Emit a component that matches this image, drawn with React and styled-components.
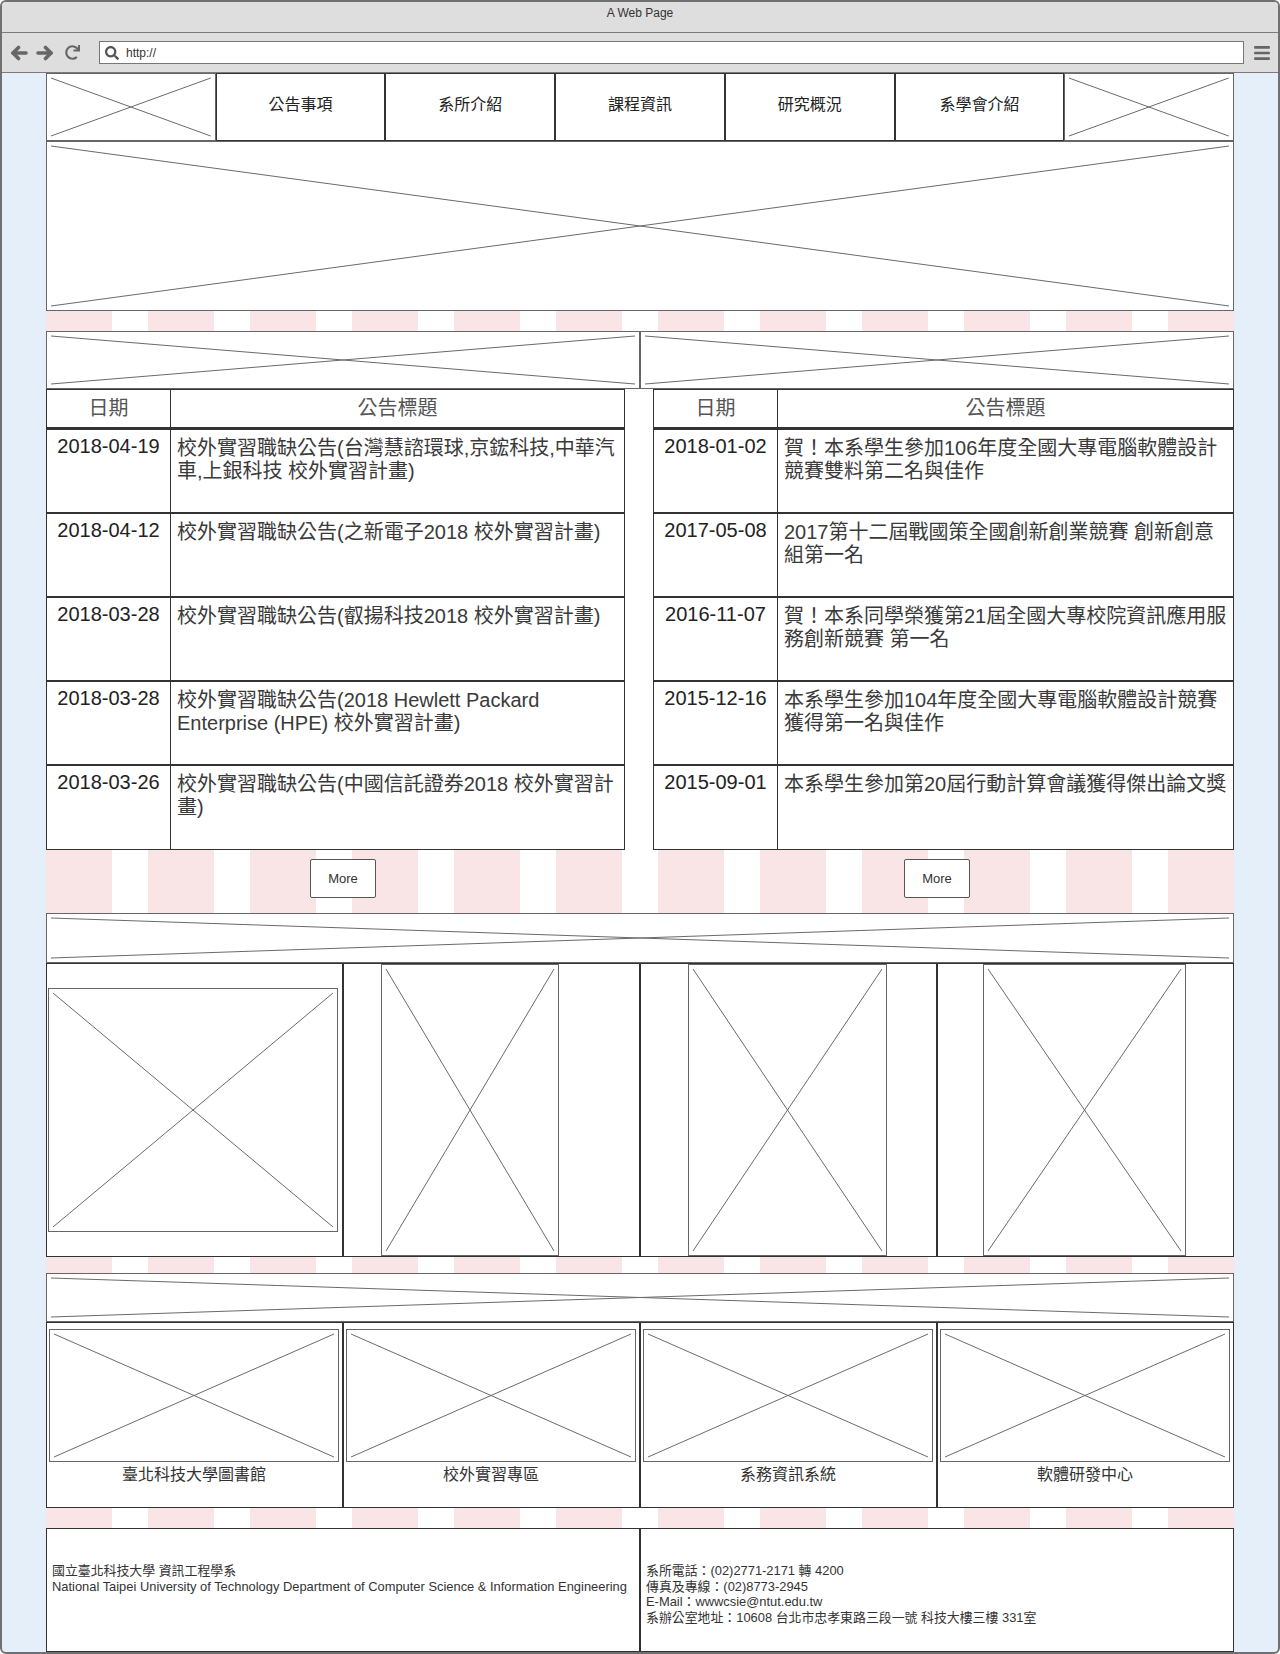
import React from 'react';
import styled, { createGlobalStyle } from 'styled-components';
import { FaRedo, FaSearch, FaBars } from 'react-icons/fa';

const SANS = `"Liberation Sans", "Noto Sans CJK TC", Arial, sans-serif`;

const GlobalStyle = createGlobalStyle`
  html, body { margin: 0; padding: 0; background: #ffffff; }
  *, *::before, *::after { box-sizing: border-box; }
`;

const Window = styled.div`
  width: 1280px;
  height: 1654px;
  border: 2px solid #707070;
  border-radius: 6px;
  overflow: hidden;
  display: flex;
  flex-direction: column;
  background: #e5effa;
  font-family: ${SANS};
`;

const TitleBar = styled.div`
  flex: none;
  height: 31px;
  background: #dedede;
  border-bottom: 1px solid #7a7a7a;
  display: flex;
  justify-content: center;
  padding-top: 3px;
  font-size: 12px;
  line-height: 16px;
  color: #333;
`;

const AddressBar = styled.div`
  flex: none;
  height: 40px;
  background: #dedede;
  border-bottom: 1px solid #7a7a7a;
  display: flex;
  align-items: center;
  padding: 0 7px 0 8px;
  color: #666;
`;

const IconSlot = styled.span`
  flex: none;
  width: ${p => p.$w}px;
  margin-right: ${p => p.$mr || 0}px;
  display: flex;
  align-items: center;
  justify-content: center;
  color: ${p => p.$color || '#666'};
`;

const UrlBox = styled.div`
  flex: 1;
  height: 23px;
  background: #fff;
  border: 1px solid #777;
  display: flex;
  align-items: center;
  padding-left: 4px;
  margin-right: 9px;
  font-size: 12px;
  color: #333;
`;

function Arrow({ dir }) {
  const flip = dir === 'right' ? 'scale(-1,1) translate(-18,0)' : undefined;
  return (
    <svg width="18" height="16" viewBox="0 0 18 16">
      <g transform={flip} fill="none" stroke="#666" strokeWidth="3.6" strokeLinecap="round" strokeLinejoin="round">
        <line x1="3" y1="8" x2="16" y2="8" />
        <polyline points="8.5,2.5 3,8 8.5,13.5" />
      </g>
    </svg>
  );
}

const Content = styled.div`
  flex: 1;
  display: flex;
  justify-content: center;
`;

const Page = styled.div`
  width: 1188px;
  display: flex;
  flex-direction: column;
  background: repeating-linear-gradient(
    to right,
    #f9e4e6 0px,
    #f9e4e6 66px,
    #ffffff 66px,
    #ffffff 102px
  );
`;

const PhBox = styled.div`
  position: relative;
  flex: none;
  background: #fff;
  border: 1px solid #666;
  width: ${p => (p.$w ? `${p.$w}px` : 'auto')};
  height: ${p => (p.$h ? `${p.$h}px` : 'auto')};
  margin-left: ${p => p.$ml || 0}px;
`;

const XSvg = styled.svg`
  position: absolute;
  top: 4px;
  left: 4px;
  width: calc(100% - 8px);
  height: calc(100% - 8px);
  overflow: visible;
`;

function Placeholder({ w, h, ml }) {
  return (
    <PhBox $w={w} $h={h} $ml={ml}>
      <XSvg>
        <line x1="0" y1="0" x2="100%" y2="100%" stroke="#6a6a6a" strokeWidth="1" />
        <line x1="100%" y1="0" x2="0" y2="100%" stroke="#6a6a6a" strokeWidth="1" />
      </XSvg>
    </PhBox>
  );
}

const NavRow = styled.div`
  display: grid;
  grid-template-columns: repeat(7, 1fr);
  grid-template-rows: 68px;
  height: 68px;
  background: #fff;
`;

const NavItem = styled.div`
  border: 1px solid #333;
  display: flex;
  align-items: center;
  justify-content: center;
  padding-bottom: 8px;
  font-size: 16px;
  color: #222;
  background: #fff;
`;

const Band = styled.div`
  flex: none;
  height: ${p => p.$h}px;
`;

const TwoCols = styled.div`
  display: grid;
  grid-template-columns: 1fr 1fr;
`;

const NewsCol = styled.div`
  display: flex;
  flex-direction: column;
  align-items: ${p => (p.$side === 'right' ? 'flex-end' : 'flex-start')};
`;

const Table = styled.div`
  width: ${p => p.$w}px;
  height: 461px;
  border: 1px solid #333;
  background: #fff;
  display: flex;
  flex-direction: column;
`;

const HeadRow = styled.div`
  display: grid;
  grid-template-columns: 124px 1fr;
  height: 40px;
  border-bottom: 3px solid #333;
  color: #555;
  font-size: 20px;
`;

const HeadCell = styled.div`
  display: flex;
  align-items: center;
  justify-content: center;
  padding-bottom: 5px;
  border-right: ${p => (p.$first ? '1px solid #333' : 'none')};
`;

const Row = styled.div`
  display: grid;
  grid-template-columns: 124px 1fr;
  height: ${p => (p.$last ? 83 : 84)}px;
  border-bottom: ${p => (p.$last ? 'none' : '2px solid #333')};
`;

const DateCell = styled.div`
  border-right: 1px solid #333;
  text-align: center;
  padding-top: 5px;
  font-size: 20px;
  line-height: 23px;
  color: #222;
`;

const TitleCell = styled.div`
  padding: 7px 6px 0 6px;
  font-size: 20px;
  line-height: 23px;
  color: #3a3a3a;
  white-space: nowrap;
  overflow: hidden;
`;

const MoreBand = styled.div`
  align-self: stretch;
  height: 63px;
  display: flex;
  justify-content: center;
  padding-top: 9px;
`;

const MoreButton = styled.div`
  width: 66px;
  height: 39px;
  background: #fff;
  border: 1px solid #555;
  border-radius: 2px;
  display: flex;
  align-items: center;
  justify-content: center;
  font-size: 13px;
  color: #333;
`;

const ShowRow = styled.div`
  display: grid;
  grid-template-columns: repeat(4, 1fr);
  height: 294px;
`;

const ShowCard = styled.div`
  border: 1px solid #333;
  background: #fff;
  display: flex;
  align-items: ${p => (p.$center ? 'center' : 'stretch')};
`;

const LinkRow = styled.div`
  display: grid;
  grid-template-columns: repeat(4, 1fr);
  height: 186px;
`;

const LinkCard = styled.div`
  border: 1px solid #333;
  background: #fff;
  display: flex;
  flex-direction: column;
  padding: 6px 3px 0 2px;
`;

const LinkLabel = styled.div`
  margin-top: 3px;
  text-align: center;
  font-size: 16px;
  line-height: 20px;
  color: #333;
`;

const FooterRow = styled.div`
  display: grid;
  grid-template-columns: 1fr 1fr;
  height: 124px;
`;

const FooterCell = styled.div`
  border: 1px solid #333;
  background: #fff;
  padding: 34px 6px 0 5px;
  font-size: 12.9px;
  line-height: 15.6px;
  color: #333;
`;

const navItems = ['公告事項', '系所介紹', '課程資訊', '研究概況', '系學會介紹'];

const leftNews = [
  { date: '2018-04-19', lines: ['校外實習職缺公告(台灣慧諮環球,京鋐科技,中華汽', '車,上銀科技 校外實習計畫)'] },
  { date: '2018-04-12', lines: ['校外實習職缺公告(之新電子2018 校外實習計畫)'] },
  { date: '2018-03-28', lines: ['校外實習職缺公告(叡揚科技2018 校外實習計畫)'] },
  { date: '2018-03-28', lines: ['校外實習職缺公告(2018 Hewlett Packard', 'Enterprise (HPE) 校外實習計畫)'] },
  { date: '2018-03-26', lines: ['校外實習職缺公告(中國信託證券2018 校外實習計', '畫)'] },
];

const rightNews = [
  { date: '2018-01-02', lines: ['賀！本系學生參加106年度全國大專電腦軟體設計', '競賽雙料第二名與佳作'] },
  { date: '2017-05-08', lines: ['2017第十二屆戰國策全國創新創業競賽 創新創意', '組第一名'] },
  { date: '2016-11-07', lines: ['賀！本系同學榮獲第21屆全國大專校院資訊應用服', '務創新競賽 第一名'] },
  { date: '2015-12-16', lines: ['本系學生參加104年度全國大專電腦軟體設計競賽', '獲得第一名與佳作'] },
  { date: '2015-09-01', lines: ['本系學生參加第20屆行動計算會議獲得傑出論文獎'] },
];

const showcase = [
  { w: 290, h: 244, ml: 1, center: true },
  { w: 178, h: 292, ml: 37 },
  { w: 199, h: 292, ml: 47 },
  { w: 203, h: 292, ml: 45 },
];

const links = ['臺北科技大學圖書館', '校外實習專區', '系務資訊系統', '軟體研發中心'];

function NewsTable({ items, width }) {
  return (
    <Table $w={width}>
      <HeadRow>
        <HeadCell $first>日期</HeadCell>
        <HeadCell>公告標題</HeadCell>
      </HeadRow>
      {items.map((it, i) => (
        <Row key={i} $last={i === items.length - 1}>
          <DateCell>{it.date}</DateCell>
          <TitleCell>
            {it.lines.map((l, j) => (
              <React.Fragment key={j}>
                {j > 0 && <br />}
                {l}
              </React.Fragment>
            ))}
          </TitleCell>
        </Row>
      ))}
    </Table>
  );
}

export default function App() {
  return (
    <>
      <GlobalStyle />
      <Window>
        <TitleBar>A Web Page</TitleBar>
        <AddressBar>
          <IconSlot $w={18} $mr={8}><Arrow dir="left" /></IconSlot>
          <IconSlot $w={18} $mr={11}><Arrow dir="right" /></IconSlot>
          <IconSlot $w={15} $mr={19}><FaRedo size={15} /></IconSlot>
          <UrlBox>
            <IconSlot $w={16} $mr={6} $color="#555"><FaSearch size={14} /></IconSlot>
            http://
          </UrlBox>
          <IconSlot $w={18}><FaBars size={18} /></IconSlot>
        </AddressBar>
        <Content>
          <Page>
            <NavRow>
              <Placeholder />
              {navItems.map(n => (
                <NavItem key={n}>{n}</NavItem>
              ))}
              <Placeholder />
            </NavRow>
            <Placeholder h={170} />
            <Band $h={20} />
            <TwoCols>
              <NewsCol $side="left">
                <Placeholder w={594} h={58} />
                <NewsTable items={leftNews} width={579} />
                <MoreBand><MoreButton>More</MoreButton></MoreBand>
              </NewsCol>
              <NewsCol $side="right">
                <Placeholder w={594} h={58} />
                <NewsTable items={rightNews} width={581} />
                <MoreBand><MoreButton>More</MoreButton></MoreBand>
              </NewsCol>
            </TwoCols>
            <Placeholder h={50} />
            <ShowRow>
              {showcase.map((s, i) => (
                <ShowCard key={i} $center={s.center}>
                  <Placeholder w={s.w} h={s.h} ml={s.ml} />
                </ShowCard>
              ))}
            </ShowRow>
            <Band $h={16} />
            <Placeholder h={49} />
            <LinkRow>
              {links.map(l => (
                <LinkCard key={l}>
                  <Placeholder h={133} />
                  <LinkLabel>{l}</LinkLabel>
                </LinkCard>
              ))}
            </LinkRow>
            <Band $h={20} />
            <FooterRow>
              <FooterCell>
                國立臺北科技大學 資訊工程學系<br />
                National Taipei University of Technology Department of Computer Science &amp; Information Engineering
              </FooterCell>
              <FooterCell>
                系所電話：(02)2771-2171 轉 4200<br />
                傳真及專線：(02)8773-2945<br />
                E-Mail：wwwcsie@ntut.edu.tw<br />
                系辦公室地址：10608 台北市忠孝東路三段一號 科技大樓三樓 331室
              </FooterCell>
            </FooterRow>
          </Page>
        </Content>
      </Window>
    </>
  );
}
